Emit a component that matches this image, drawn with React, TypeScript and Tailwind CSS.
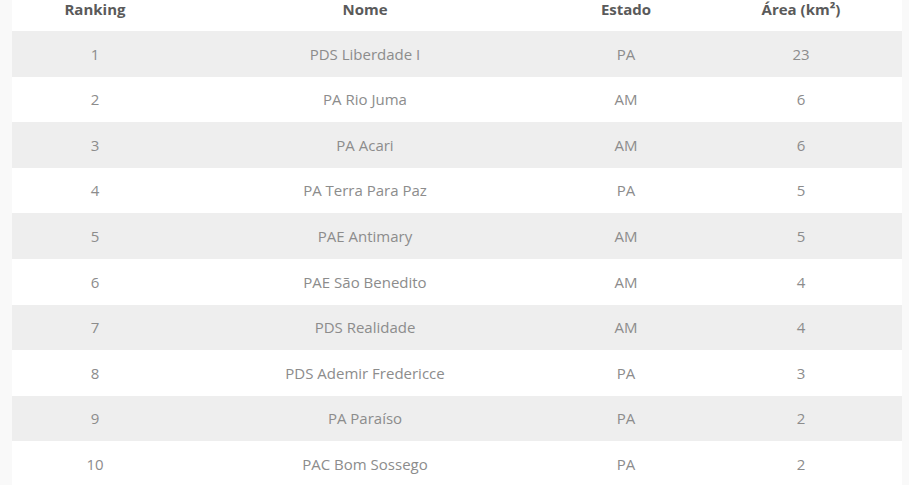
const rows = [
  { rank: 1, nome: "PDS Liberdade I", estado: "PA", area: 23 },
  { rank: 2, nome: "PA Rio Juma", estado: "AM", area: 6 },
  { rank: 3, nome: "PA Acari", estado: "AM", area: 6 },
  { rank: 4, nome: "PA Terra Para Paz", estado: "PA", area: 5 },
  { rank: 5, nome: "PAE Antimary", estado: "AM", area: 5 },
  { rank: 6, nome: "PAE São Benedito", estado: "AM", area: 4 },
  { rank: 7, nome: "PDS Realidade", estado: "AM", area: 4 },
  { rank: 8, nome: "PDS Ademir Fredericce", estado: "PA", area: 3 },
  { rank: 9, nome: "PA Paraíso", estado: "PA", area: 2 },
  { rank: 10, nome: "PAC Bom Sossego", estado: "PA", area: 2 },
];

export default function App() {
  return (
    <div className="min-h-screen bg-[#f9f9f9] pl-[12px] pr-[7px] font-['Open_Sans',sans-serif]">
      <table className="w-[890px] table-fixed border-collapse bg-white text-center">
        <thead>
          <tr className="h-[31px] text-[15px] font-semibold leading-[16px] text-[#5a5a5a]">
            <th className="w-[166px] p-0 pt-[1px] align-top">Ranking</th>
            <th className="w-[374px] p-0 pt-[1px] align-top">Nome</th>
            <th className="w-[148px] p-0 pt-[1px] align-top">Estado</th>
            <th className="w-[202px] p-0 pt-[1px] align-top">Área (km²)</th>
          </tr>
        </thead>
        <tbody className="text-[15px] text-[#8c8c8c]">
          {rows.map((r, i) => (
            <tr key={r.rank} className={i % 2 === 0 ? "h-[45.6px] bg-[#eeeeee]" : "h-[45.6px] bg-white"}>
              <td>{r.rank}</td>
              <td>{r.nome}</td>
              <td>{r.estado}</td>
              <td>{r.area}</td>
            </tr>
          ))}
        </tbody>
      </table>
    </div>
  );
}
